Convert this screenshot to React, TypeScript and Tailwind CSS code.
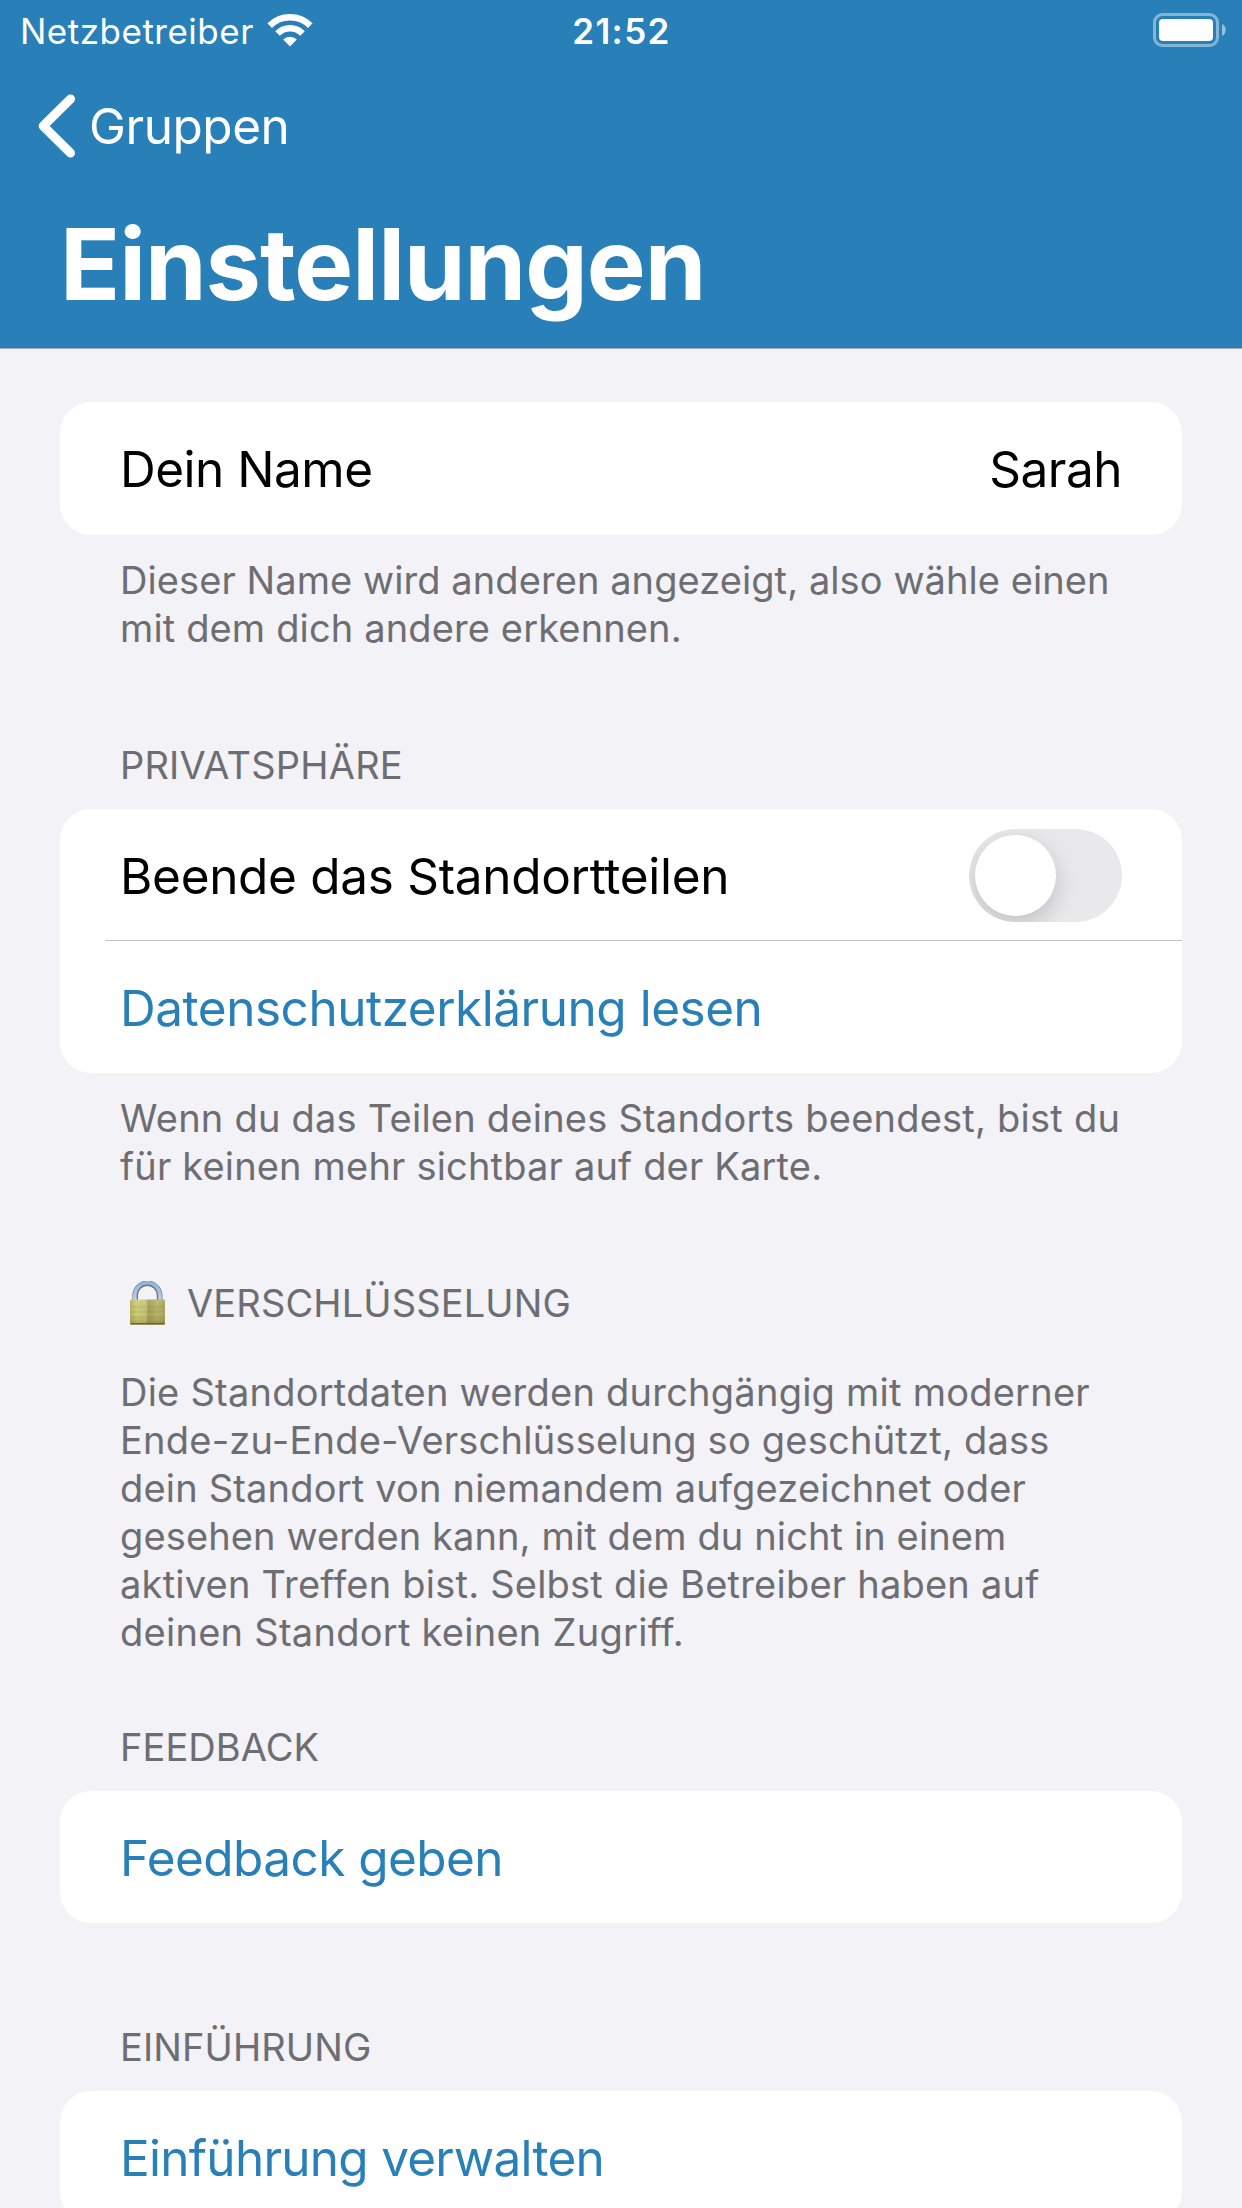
import React from "react";

type Line = [text: string, spacing: number];

function Note({ lines }: { lines: Line[] }) {
  return (
    <p className="flex flex-col pl-[60px] text-[38px] leading-[48px] text-[#6d6d72]">
      {lines.map(([text, spacing]) => (
        <span key={text} className="whitespace-pre" style={{ letterSpacing: spacing }}>{text}</span>
      ))}
    </p>
  );
}

function Heading({ children, spacing = 0.1 }: { children: React.ReactNode; spacing?: number }) {
  return (
    <h2 className="flex h-12 items-center pl-[60px] text-[38px] leading-[48px] whitespace-pre text-[#6d6d72]" style={{ letterSpacing: spacing }}>
      {children}
    </h2>
  );
}

function Card({ children, className = "" }: { children: React.ReactNode; className?: string }) {
  return <section className={`flex flex-col rounded-[31px] bg-white ${className}`}>{children}</section>;
}

function LinkRow({ label, spacing }: { label: string; spacing: number }) {
  return (
    <a className="flex h-[132px] items-center px-[60px] pt-0.5 text-[#2980b9]" style={{ letterSpacing: spacing }}>
      {label}
    </a>
  );
}

function Lock() {
  return (
    <svg className="mr-[21px] ml-[9px] h-[44px] w-[37px]" viewBox="0 0 37 44">
      <defs>
        <linearGradient id="brass" x1="0" x2="1" y1="0" y2="0">
          <stop offset="0" stopColor="#b5b061" />
          <stop offset="0.2" stopColor="#cfcc7c" />
          <stop offset="0.46" stopColor="#c6c274" />
          <stop offset="0.52" stopColor="#a39d57" />
          <stop offset="0.78" stopColor="#b9b46a" />
          <stop offset="1" stopColor="#a8a35a" />
        </linearGradient>
        <linearGradient id="shade" x1="0" x2="0" y1="0" y2="1">
          <stop offset="0" stopColor="#fff" stopOpacity="0.12" />
          <stop offset="0.6" stopColor="#5d5520" stopOpacity="0" />
          <stop offset="1" stopColor="#5d5520" stopOpacity="0.3" />
        </linearGradient>
        <linearGradient id="steel" x1="0" x2="0" y1="0" y2="1">
          <stop offset="0" stopColor="#8fb4e0" />
          <stop offset="1" stopColor="#bdd5ee" />
        </linearGradient>
      </defs>
      <path d="M6.200 20V14.500a12.200 12.200 0 0 1 24.400 0V20" fill="none" stroke="#77716a" strokeWidth="5.600" />
      <path d="M5.900 20V14.300a12.500 12.500 0 0 1 25 0V20" fill="none" stroke="url(#steel)" strokeWidth="3.600" />
      <rect x="1" y="18.500" width="35" height="25" rx="1" fill="url(#brass)" />
      <rect x="1" y="18.500" width="35" height="25" rx="1" fill="url(#shade)" />
      <path d="M1 26h35M1 31h35M1 36h35" stroke="#8d8740" strokeOpacity="0.25" strokeWidth="1" />
      <path d="M1.500 42.700h34" stroke="#6f6425" strokeWidth="1.600" />
    </svg>
  );
}

export default function App() {
  return (
    <div className="h-[2208px] w-[1242px] overflow-hidden bg-[#f2f2f7] font-['Inter',sans-serif] text-[49.5px] text-black">
      <header className="h-[349px] border-b border-[#a6aab2] bg-[#2980b9] text-white">
        <div className="grid h-[60px] grid-cols-[1fr_auto_1fr] items-center pr-[15px] pl-5 text-[35px]">
          <div className="flex items-center">
            <span className="pt-0.5 tracking-[0.5px]">Netzbetreiber</span>
            <svg className="ml-[13px] h-[34px] w-[46px]" viewBox="0 0 46 34" fill="none" stroke="#fff" strokeWidth="6.500">
              <path d="M2.700 12.600a28.800 28.800 0 0 1 40.600 0" />
              <path d="M10.500 20.500a17.700 17.700 0 0 1 25 0" />
              <path d="M16.200 26.500a9.600 9.600 0 0 1 13.600 0L23 33.500z" fill="#fff" stroke="none" />
            </svg>
          </div>
          <div className="pt-0.5 pr-1 text-center font-semibold tracking-[1.4px]">21:52</div>
          <svg className="h-[34px] w-[74px] justify-self-end" viewBox="0 0 74 34">
            <rect x="1.500" y="1.500" width="63" height="31" rx="8" fill="none" stroke="#fff" strokeOpacity="0.42" strokeWidth="3" />
            <rect x="6" y="6" width="54" height="22" rx="4" fill="#fff" />
            <path d="M69 11c5 2 5 10 0 12z" fill="#fff" fillOpacity="0.5" />
          </svg>
        </div>
        <div className="flex h-[132px] items-center pl-[38px]">
          <svg className="mr-[14px] h-[64px] w-[37px]" viewBox="0 0 37 64" fill="none" stroke="#fff" strokeWidth="9" strokeLinecap="round" strokeLinejoin="round">
            <path d="M32.500 5 5.200 32l27.300 27" />
          </svg>
          <span className="tracking-[-0.45px]">Gruppen</span>
        </div>
        <h1 className="pl-[60px] text-[99px] leading-[144px] font-bold tracking-[-1px]">Einstellungen</h1>
      </header>
      <main className="px-[60px] pt-[53px]">
        <Card>
          <div className="flex h-[133px] items-center justify-between px-[60px] pt-px tracking-[-0.5px]">
            <span>Dein Name</span>
            <span>Sarah</span>
          </div>
        </Card>
        <div className="pt-[21px]">
          <Note lines={[["Dieser Name wird anderen angezeigt, also wähle einen", 0.08], ["mit dem dich andere erkennen.", 0.14]]} />
        </div>
        <div className="pt-[89px]">
          <Heading spacing={0.2}>PRIVATSPHÄRE</Heading>
        </div>
        <Card className="mt-5">
          <div className="flex h-[131px] items-center justify-between px-[60px] pt-px tracking-[-0.31px]">
            <span className="pt-0.5">Beende das Standortteilen</span>
            <span className="mt-px flex h-[93px] w-[153px] items-center overflow-hidden rounded-full bg-[#e9e9eb] p-1.5">
              <span className="size-[81px] rounded-full bg-white shadow-[0_8px_24px_rgba(0,0,0,0.18)]" />
            </span>
          </div>
          <div className="ml-[45px] h-px bg-[#c3c3c6]" />
          <LinkRow label="Datenschutzerklärung lesen" spacing={-0.48} />
        </Card>
        <div className="pt-[21px]">
          <Note lines={[["Wenn du das Teilen deines Standorts beendest, bist du", 0.23], ["für keinen mehr sichtbar auf der Karte.", 0.18]]} />
        </div>
        <div className="pt-[89px]">
          <Heading spacing={0.13}>
            <Lock />
            VERSCHLÜSSELUNG
          </Heading>
        </div>
        <div className="pt-[41px]">
          <Note
            lines={[
              ["Die Standortdaten werden durchgängig mit moderner", 0.24],
              ["Ende-zu-Ende-Verschlüsselung so geschützt, dass", 0.23],
              ["dein Standort von niemandem aufgezeichnet oder", 0.19],
              ["gesehen werden kann, mit dem du nicht in einem", 0.12],
              ["aktiven Treffen bist. Selbst die Betreiber haben auf", 0.22],
              ["deinen Standort keinen Zugriff.", 0.27],
            ]}
          />
        </div>
        <div className="pt-[67px]">
          <Heading spacing={0.06}>FEEDBACK</Heading>
        </div>
        <Card className="mt-5">
          <LinkRow label="Feedback geben" spacing={-0.56} />
        </Card>
        <div className="pt-[100px]">
          <Heading>EINFÜHRUNG</Heading>
        </div>
        <Card className="mt-5">
          <LinkRow label="Einführung verwalten" spacing={-0.74} />
        </Card>
      </main>
    </div>
  );
}
